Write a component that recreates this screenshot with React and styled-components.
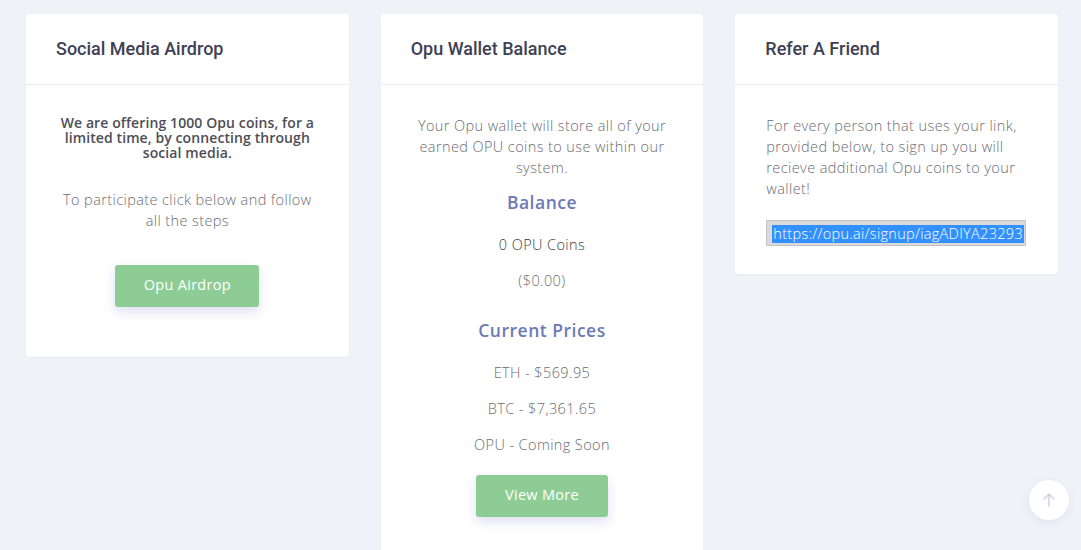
import styled, { createGlobalStyle } from "styled-components";

const GlobalStyle = createGlobalStyle`
  html, body {
    margin: 0;
    padding: 0;
    background: #f1f1f8;
    overflow: hidden;
  }
  body {
    font-family: "Open Sans", "Noto Sans", sans-serif;
  }
  * { box-sizing: border-box; }
`;

const Page = styled.main`
  display: grid;
  grid-template-columns: repeat(3, 1fr);
  column-gap: 32px;
  align-items: start;
  padding: 14px 23px 0 26px;
  min-height: 550px;
`;

const Card = styled.section`
  background: #fff;
  border-radius: 4px;
  box-shadow: 0 1px 2px rgba(60, 60, 110, 0.04);
`;

const CardHeader = styled.header`
  height: 71px;
  display: flex;
  align-items: center;
  padding: 0 30px 2px;
  border-bottom: 1px solid #ececf3;
`;

const Title = styled.h3`
  margin: 0;
  font-family: Roboto, "Liberation Sans", sans-serif;
  font-weight: 500;
  font-size: 18px;
  color: #3e4153;
`;

const CardBody = styled.div`
  padding: ${(p) => p.$pad || "30px 30px 50px"};
  display: flex;
  flex-direction: column;
  align-items: ${(p) => (p.$left ? "flex-start" : "center")};
  text-align: ${(p) => (p.$left ? "left" : "center")};
`;

const Lead = styled.p`
  margin: 0 0 29px;
  font-size: 14px;
  font-weight: 600;
  line-height: 15px;
  color: #4d4d56;
  letter-spacing: 0.1px;
`;

const Text = styled.p`
  margin: 0 0 ${(p) => p.$mb ?? 15}px;
  font-size: 14.5px;
  font-weight: 300;
  line-height: 21px;
  letter-spacing: 0.4px;
  color: ${(p) => (p.$dark ? "#3c3c44" : "#6b6b73")};
`;

const SubHeading = styled.h4`
  margin: ${(p) => p.$mt ?? 0}px 0 20px;
  font-size: 17.5px;
  font-weight: 600;
  line-height: 24px;
  letter-spacing: 0.5px;
  color: #6c7ab6;
`;

const GreenButton = styled.button`
  margin-top: ${(p) => p.$mt ?? 0}px;
  width: ${(p) => p.$w}px;
  height: 42px;
  padding: 0 0 3px;
  border: none;
  border-radius: 3px;
  background: #8dcd95;
  color: #fff;
  font-family: "Open Sans", "Noto Sans", sans-serif;
  font-size: 14.5px;
  font-weight: 500;
  letter-spacing: 0.3px;
  box-shadow: 0 5px 12px rgba(110, 110, 200, 0.22);
  cursor: pointer;
`;

const LinkBox = styled.div`
  margin-top: 21px;
  display: inline-block;
  border: 1px solid #c4c4c4;
  background: #dadada;
  padding: 1px 1px 1px 5px;
`;

const Selected = styled.span`
  display: inline-block;
  background: #3390ff;
  color: #fff;
  font-size: 14.5px;
  font-weight: 300;
  line-height: 18px;
  letter-spacing: 0.3px;
  padding: 0 1px;
`;

const ScrollTop = styled.button`
  position: fixed;
  right: 12px;
  bottom: 30px;
  width: 40px;
  height: 40px;
  border-radius: 50%;
  border: none;
  background: #fff;
  display: flex;
  align-items: center;
  justify-content: center;
  box-shadow: 0 2px 8px rgba(120, 120, 200, 0.12);
  cursor: pointer;
`;

export default function App() {
  return (
    <>
      <GlobalStyle />
      <Page>
        <Card>
          <CardHeader>
            <Title>Social Media Airdrop</Title>
          </CardHeader>
          <CardBody>
            <Lead>
              We are offering 1000 Opu coins, for a limited time, by connecting
              through social media.
            </Lead>
            <Text $mb={0}>
              To participate click below and follow all the steps
            </Text>
            <GreenButton $w={144} $mt={34}>
              Opu Airdrop
            </GreenButton>
          </CardBody>
        </Card>

        <Card>
          <CardHeader>
            <Title>Opu Wallet Balance</Title>
          </CardHeader>
          <CardBody>
            <Text $mb={12}>
              Your Opu wallet will store all of your earned OPU coins to use
              within our system.
            </Text>
            <SubHeading>Balance</SubHeading>
            <Text $dark>0 OPU Coins</Text>
            <Text>($0.00)</Text>
            <SubHeading $mt={12}>Current Prices</SubHeading>
            <Text>ETH - $569.95</Text>
            <Text>BTC - $7,361.65</Text>
            <Text>OPU - Coming Soon</Text>
            <GreenButton $w={132} $mt={5}>
              View More
            </GreenButton>
          </CardBody>
        </Card>

        <Card>
          <CardHeader>
            <Title>Refer A Friend</Title>
          </CardHeader>
          <CardBody $left $pad="30px 30px 28px 31px">
            <Text $mb={0}>
              For every person that uses your link, provided below, to sign up
              you will recieve additional Opu coins to your wallet!
            </Text>
            <LinkBox>
              <Selected>https://opu.ai/signup/iagADIYA23293</Selected>
            </LinkBox>
          </CardBody>
        </Card>
      </Page>
      <ScrollTop aria-label="Scroll to top">
        <svg width="16" height="16" viewBox="0 0 16 16" fill="none">
          <path
            d="M8 14V2M3 7l5-5 5 5"
            stroke="#cfcfe0"
            strokeWidth="1.4"
            strokeLinecap="round"
            strokeLinejoin="round"
          />
        </svg>
      </ScrollTop>
    </>
  );
}
